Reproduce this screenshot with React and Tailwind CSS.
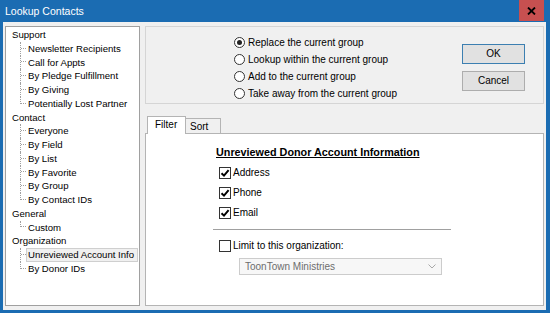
import React from "react";

const tree = [
  { cat: "Support", items: ["Newsletter Recipients", "Call for Appts", "By Pledge Fulfillment", "By Giving", "Potentially Lost Partner"] },
  { cat: "Contact", items: ["Everyone", "By Field", "By List", "By Favorite", "By Group", "By Contact IDs"] },
  { cat: "General", items: ["Custom"] },
  { cat: "Organization", items: ["Unreviewed Account Info", "By Donor IDs"] },
];

function Connector({ last }) {
  if (last) {
    return (
      <div className="ml-[14px] w-[6px] h-full flex flex-col shrink-0">
        <div className="h-1/2 border-l border-b border-dotted border-[#a0a0a0]" />
      </div>
    );
  }
  return (
    <div className="ml-[14px] w-[6px] h-full border-l border-dotted border-[#a0a0a0] flex flex-col shrink-0">
      <div className="h-1/2 border-b border-dotted border-[#a0a0a0]" />
    </div>
  );
}

function Radio({ checked, label }) {
  return (
    <div className="h-[17px] flex items-center gap-[3px]">
      <div className="w-[11px] h-[11px] rounded-full border border-[#333] bg-white flex items-center justify-center">
        {checked && <div className="w-[5px] h-[5px] rounded-full bg-[#222]" />}
      </div>
      <span className="whitespace-nowrap">{label}</span>
    </div>
  );
}

function Check({ checked }) {
  return (
    <div className="w-[12px] h-[12px] border border-[#333] bg-white flex items-center justify-center shrink-0">
      {checked && (
        <svg width="10" height="10" viewBox="0 0 10 10">
          <path d="M1.5 5.2 L4 7.6 L8.6 2.2" fill="none" stroke="#000" strokeWidth="2" />
        </svg>
      )}
    </div>
  );
}

export default function App() {
  return (
    <div className="w-[550px] h-[313px] bg-[#1b6cb2] flex flex-col font-['Liberation_Sans',Arial,sans-serif] text-[10px] text-black overflow-hidden leading-none">
      <div className="h-[22px] shrink-0 flex items-start">
        <div className="flex-1 pl-[5px] pt-[6px] text-white text-[10.5px]">Lookup Contacts</div>
        <div className="w-[25px] h-[21px] bg-[#c75050] mr-[6px] flex items-center justify-center">
          <svg width="9" height="8" viewBox="0 0 9 8">
            <path d="M1 0.5 L8 7.5 M8 0.5 L1 7.5" stroke="#000" strokeWidth="1.8" />
          </svg>
        </div>
      </div>
      <div className="flex-1 ml-[3px] mr-[4px] mb-[3px] bg-[#f0f0f0] flex gap-[5px] pl-[2px] pr-[2px] pt-[4px] pb-[4px] min-h-0">
        {/* tree */}
        <div className="w-[135px] shrink-0 bg-white border border-[#a0a0a0] pt-[1px] text-[9.6px]">
          {tree.map((g) => (
            <div key={g.cat}>
              <div className="h-[13.75px] flex items-center pl-[6px] whitespace-nowrap">{g.cat}</div>
              {g.items.map((it, i) => {
                const sel = it === "Unreviewed Account Info";
                return (
                  <div key={it} className="h-[13.75px] flex items-stretch">
                    <Connector last={i === g.items.length - 1} />
                    <div
                      className={
                        "flex items-center whitespace-nowrap pl-[1px] pr-[3px] border " +
                        (sel ? "bg-[#f0f0f0] border-[#cfcfcf]" : "border-transparent")
                      }
                    >
                      {it}
                    </div>
                  </div>
                );
              })}
            </div>
          ))}
        </div>
        {/* right */}
        <div className="flex-1 flex flex-col min-w-0">
          <div className="h-[78px] shrink-0 border border-[#d5d5d5] flex">
            <div className="ml-[88px] pt-[7px] flex flex-col">
              <Radio checked label="Replace the current group" />
              <Radio label="Lookup within the current group" />
              <Radio label="Add to the current group" />
              <Radio label="Take away from the current group" />
            </div>
            <div className="ml-auto mr-[18px] mt-[17px] flex flex-col gap-[7px]">
              <div className="w-[63px] h-[20px] bg-[#e1e1e1] border border-[#3c7fb1] flex items-center justify-center">OK</div>
              <div className="w-[63px] h-[20px] bg-[#e1e1e1] border border-[#adadad] flex items-center justify-center">Cancel</div>
            </div>
          </div>
          <div className="h-[12px] shrink-0" />
          <div className="h-[17px] shrink-0 flex items-end ml-[2px]">
            <div className="h-[18px] w-[39px] -mb-px relative bg-white border border-b-0 border-[#b4b4b4] pl-[7px] pt-[3px]">Filter</div>
            <div className="h-[15px] w-[35px] bg-[#f0f0f0] border border-b-0 border-l-0 border-[#b4b4b4] pl-[4px] pt-[3px]">Sort</div>
          </div>
          <div className="flex-1 bg-white border border-[#b4b4b4]">
            <div className="ml-[67px] w-[238px] flex flex-col">
              <div className="ml-[3px] mt-[12px] h-[12px] flex items-center font-bold underline text-[10.8px] whitespace-nowrap">Unreviewed Donor Account Information</div>
              <div className="mt-[5px]">
                {["Address", "Phone", "Email"].map((l) => (
                  <div key={l} className="h-[20px] flex items-center gap-[2px] ml-[6px]">
                    <Check checked />
                    <span>{l}</span>
                  </div>
                ))}
              </div>
              <div className="mt-[6px] border-t border-[#a0a0a0] border-b border-b-white" />
              <div className="mt-[8px] h-[14px] flex items-center gap-[2px] ml-[6px]">
                <Check />
                <span>Limit to this organization:</span>
              </div>
              <div className="mt-[5px] ml-[26px] w-[203px] h-[17px] border border-[#cccccc] bg-[#f7f7f7] flex items-center pl-[5px] pr-[5px] text-[#6d6d6d]">
                <span className="flex-1">ToonTown Ministries</span>
                <svg width="8" height="5" viewBox="0 0 8 5">
                  <path d="M0.5 0.5 L4 4 L7.5 0.5" fill="none" stroke="#a8a8a8" strokeWidth="1" />
                </svg>
              </div>
            </div>
          </div>
        </div>
      </div>
    </div>
  );
}
